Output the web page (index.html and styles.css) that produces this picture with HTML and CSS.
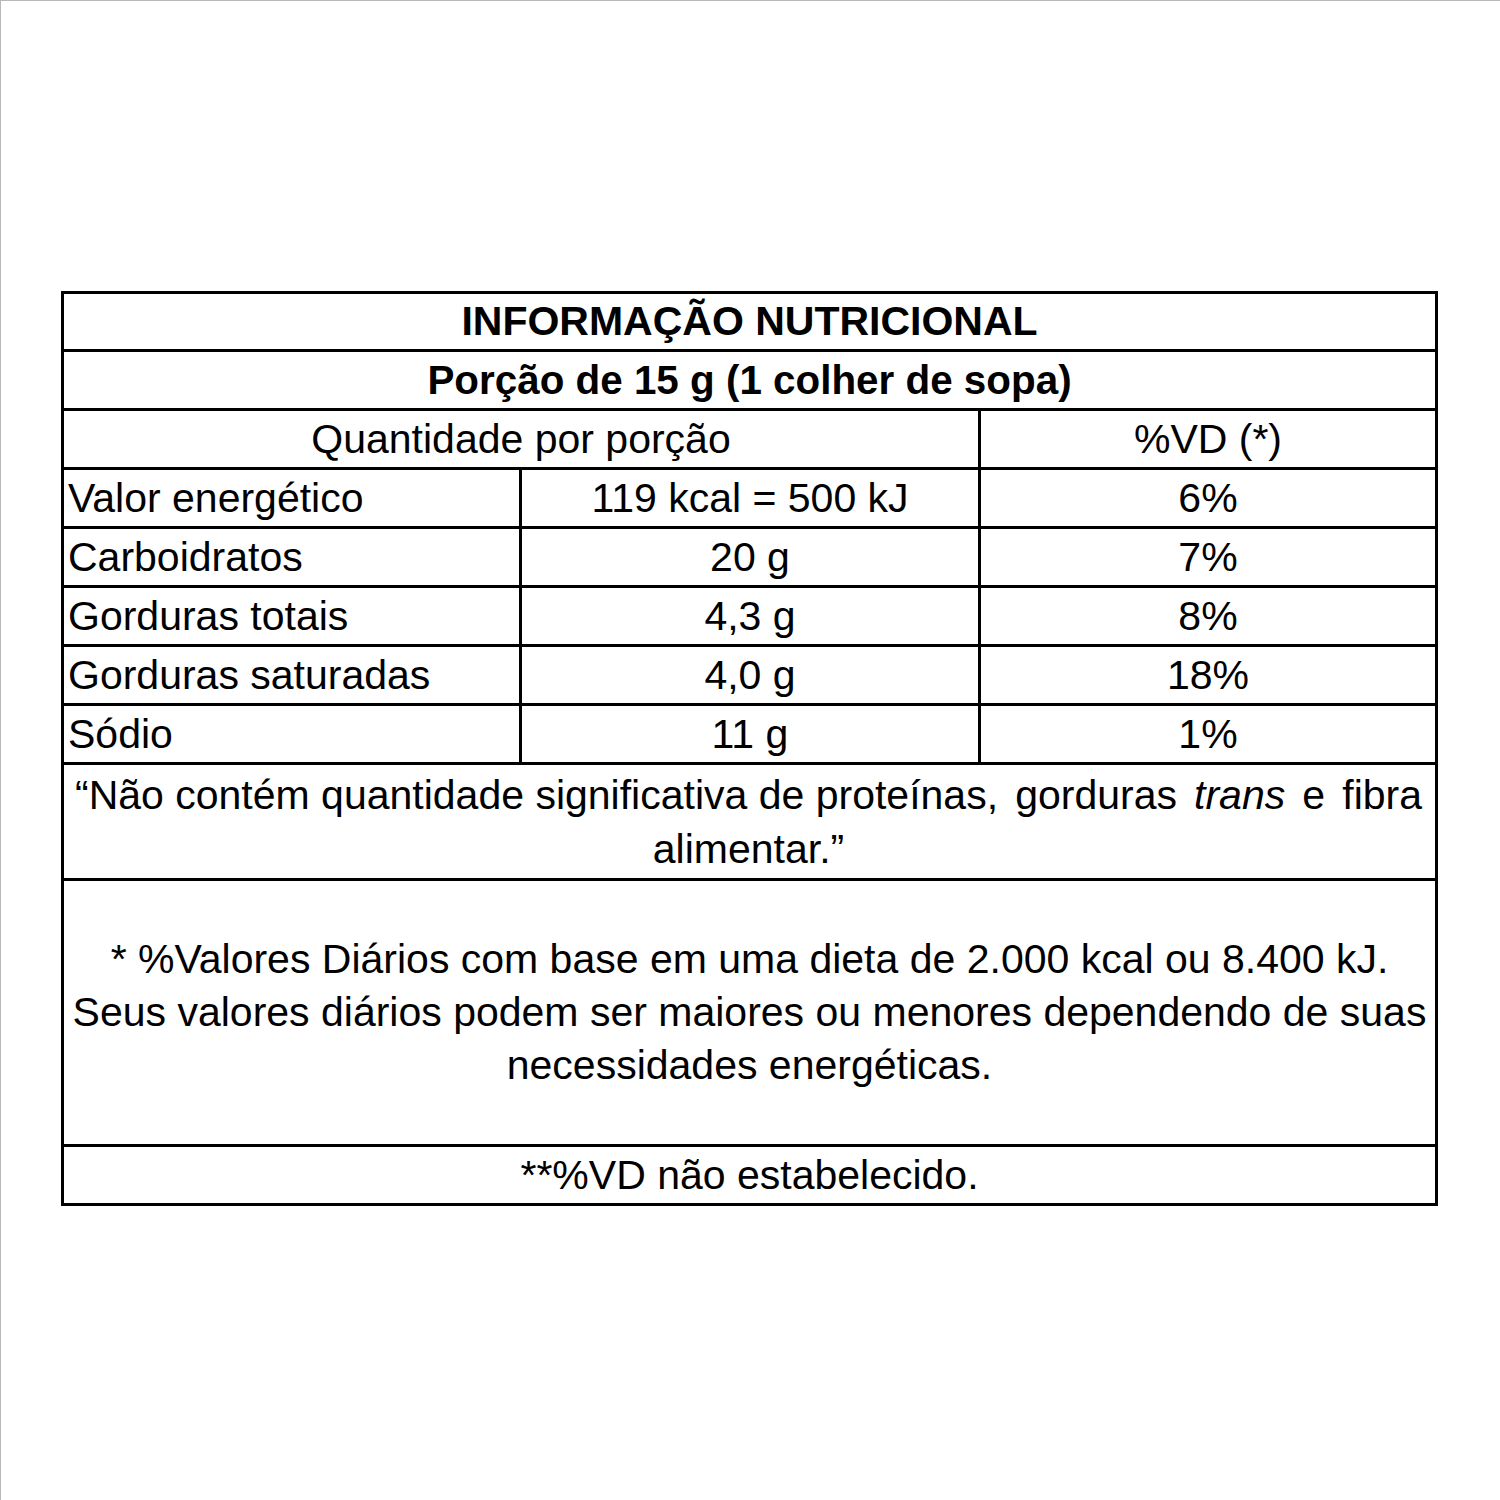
FILE: index.html
```html
<!DOCTYPE html>
<html lang="pt">
<head>
<meta charset="utf-8">
<title>Informação Nutricional</title>
<link rel="stylesheet" href="styles.css">
</head>
<body>
<div class="label">
  <div class="row single title"><div class="cell">INFORMAÇÃO NUTRICIONAL</div></div>
  <div class="row single portion"><div class="cell">Porção de 15 g (1 colher de sopa)</div></div>
  <div class="row grid3 head">
    <div class="cell span2">Quantidade por porção</div>
    <div class="cell">%VD (*)</div>
  </div>
  <div class="row grid3">
    <div class="cell name">Valor energético</div>
    <div class="cell">119 kcal = 500 kJ</div>
    <div class="cell">6%</div>
  </div>
  <div class="row grid3">
    <div class="cell name">Carboidratos</div>
    <div class="cell">20 g</div>
    <div class="cell">7%</div>
  </div>
  <div class="row grid3">
    <div class="cell name">Gorduras totais</div>
    <div class="cell">4,3 g</div>
    <div class="cell">8%</div>
  </div>
  <div class="row grid3">
    <div class="cell name">Gorduras saturadas</div>
    <div class="cell">4,0 g</div>
    <div class="cell">18%</div>
  </div>
  <div class="row grid3">
    <div class="cell name">Sódio</div>
    <div class="cell">11 g</div>
    <div class="cell">1%</div>
  </div>
  <div class="row note">
    <div class="line spread">
      <span>“Não contém quantidade significativa de proteínas,</span>
      <span>gorduras</span>
      <span><i>trans</i></span>
      <span>e</span>
      <span>fibra</span>
    </div>
    <div class="line center">alimentar.”</div>
  </div>
  <div class="row foot">
    <div class="foot-text">* %Valores Diários com base em uma dieta de 2.000 kcal ou 8.400 kJ.<br>Seus valores diários podem ser maiores ou menores dependendo de suas<br>necessidades energéticas.</div>
  </div>
  <div class="row single last"><div class="cell">**%VD não estabelecido.</div></div>
</div>
</body>
</html>
```

FILE: styles.css
```css
html, body {
  margin: 0;
  padding: 0;
  background: #ffffff;
}
body {
  width: 1499px;
  height: 1499px;
  border-top: 1px solid #b8b8b8;
  border-left: 1px solid #b8b8b8;
  font-family: "Liberation Sans", Arial, sans-serif;
  color: #000;
  overflow: hidden;
}
.label {
  margin-top: 290px;
  margin-left: 60px;
  width: 1377px;
  box-sizing: border-box;
  border: 3px solid #000;
  font-size: 41px;
}
.row {
  border-bottom: 3px solid #000;
}
.row:last-child {
  border-bottom: none;
}
.cell {
  height: 56px;
  line-height: 56px;
  text-align: center;
  white-space: nowrap;
}
.title .cell {
  height: 55px;
  line-height: 55px;
  font-weight: bold;
}
.portion .cell {
  font-weight: bold;
  font-size: 40.4px;
}
.grid3 {
  display: grid;
  grid-template-columns: 455px 459px 457px;
}
.grid3 .cell + .cell {
  border-left: 3px solid #000;
}
.span2 {
  grid-column: span 2;
}
.cell.name {
  text-align: left;
  padding-left: 4px;
}
.note {
  height: 116px;
  padding: 3px 13px 0 11px;
  box-sizing: border-box;
  line-height: 54px;
}
.line {
  display: block;
  white-space: nowrap;
}
.spread {
  display: flex;
  justify-content: space-between;
}
.center {
  text-align: center;
}
.foot {
  height: 263px;
  display: flex;
  align-items: center;
  justify-content: center;
}
.foot-text {
  text-align: center;
  line-height: 53px;
  white-space: nowrap;
}
```
